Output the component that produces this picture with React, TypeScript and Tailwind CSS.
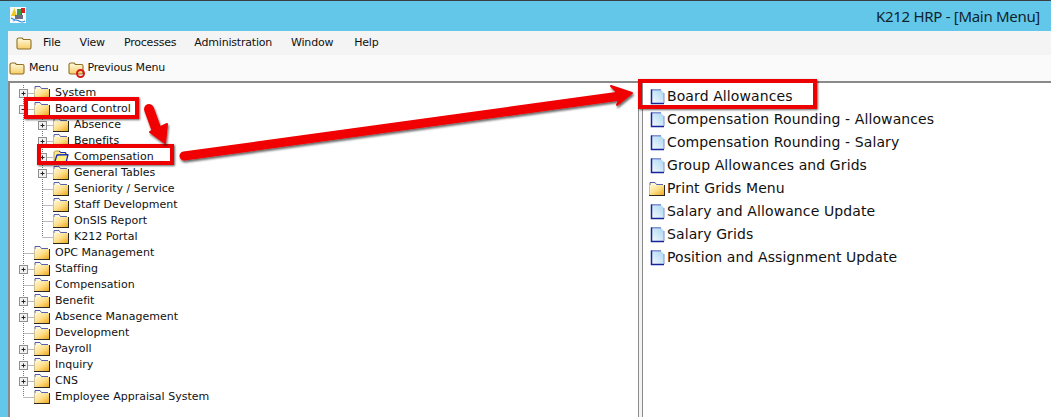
const Folder = ({ open }: { open?: boolean }) =>
  open ? (
    <svg width="16" height="14" viewBox="0 0 16 14" className="shrink-0">
      <path d="M1 12.5 L1 2 L2.5 1 L6 1 L7 2.5 L13 2.5 L13 5 L4 5 L1 12.5 Z" fill="#ffe98a" stroke="#a88a30" strokeWidth="0.8" />
      <path d="M4 5 L15 4.6 L13 12.6 L1.5 12.6 Z" fill="#ffee7a" stroke="#1428c8" strokeWidth="1.3" strokeLinejoin="round" />
      <path d="M6 1 L8 2.5 L12.5 2.5 L13 4.5" fill="none" stroke="#1428c8" strokeWidth="1" />
    </svg>
  ) : (
    <svg width="16" height="14" viewBox="0 0 16 14" className="shrink-0">
      <defs>
        <linearGradient id="fg" x1="0" y1="0" x2="1" y2="1">
          <stop offset="0" stopColor="#fff8dc" />
          <stop offset="0.5" stopColor="#fee08a" />
          <stop offset="1" stopColor="#eea81e" />
        </linearGradient>
      </defs>
      <path d="M1 3 V0.5 H6 L7.5 2.5 H14" fill="#fff6d0" stroke="#2a3aa0" strokeWidth="0.8" />
      <rect x="0.5" y="3" width="14.5" height="10" fill="url(#fg)" />
      <path d="M0.5 3 V13" stroke="#b8a878" strokeWidth="0.7" />
      <path d="M0 13.5 H16 M15.5 3 V14" stroke="#2a2620" strokeWidth="1" />
    </svg>
  );

const ToolFolder = () => (
  <svg width="16" height="13" viewBox="0 0 16 13" className="shrink-0">
    <defs>
      <linearGradient id="tf" x1="0" y1="0" x2="0" y2="1">
        <stop offset="0" stopColor="#fffbe2" />
        <stop offset="1" stopColor="#f6cd64" />
      </linearGradient>
    </defs>
    <path d="M1 3 Q1 1 3 1 L6 1 L7.5 2.5 L13.5 2.5 Q15 2.5 15 4 L15 10.5 Q15 12 13.5 12 L2.5 12 Q1 12 1 10.5 Z" fill="url(#tf)" stroke="#8f6f24" strokeWidth="1.1" />
  </svg>
);

const Doc = () => (
  <svg width="16" height="16" viewBox="0 0 16 16" className="shrink-0">
    <defs>
      <linearGradient id="dg" x1="0" y1="1" x2="1" y2="0">
        <stop offset="0" stopColor="#f8faff" />
        <stop offset="0.5" stopColor="#cfe8f8" />
        <stop offset="1" stopColor="#a8d6f2" />
      </linearGradient>
    </defs>
    <path d="M2 1 L12 1 L15 4 L15 14 L2 14 Z" fill="url(#dg)" />
    <path d="M2.5 0.5 L2.5 14.5 L15 14.5" fill="none" stroke="#16249c" strokeWidth="1.5" />
    <path d="M2 0.8 L12 0.8" stroke="#2a3ab0" strokeWidth="0.8" />
    <path d="M15 4 L15 14" stroke="#8a93c8" strokeWidth="1" />
  </svg>
);

type Row = { label: string; level: 0 | 1; plus?: boolean; open?: boolean; lastSub?: boolean; last?: boolean; minus?: boolean };

const rows: Row[] = [
  { label: "System", level: 0, plus: true },
  { label: "Board Control", level: 0, minus: true },
  { label: "Absence", level: 1, plus: true },
  { label: "Benefits", level: 1, plus: true },
  { label: "Compensation", level: 1, plus: true, open: true },
  { label: "General Tables", level: 1, plus: true },
  { label: "Seniority / Service", level: 1 },
  { label: "Staff Development", level: 1 },
  { label: "OnSIS Report", level: 1 },
  { label: "K212 Portal", level: 1, lastSub: true },
  { label: "OPC Management", level: 0 },
  { label: "Staffing", level: 0, plus: true },
  { label: "Compensation", level: 0 },
  { label: "Benefit", level: 0, plus: true },
  { label: "Absence Management", level: 0, plus: true },
  { label: "Development", level: 0 },
  { label: "Payroll", level: 0, plus: true },
  { label: "Inquiry", level: 0, plus: true },
  { label: "CNS", level: 0, plus: true },
  { label: "Employee Appraisal System", level: 0, last: true },
];

const Connector = ({ r }: { r: Row }) => {
  const w = r.level === 0 ? 24 : 43;
  const cx = r.level === 0 ? 13.5 : 32.5;
  const dots = "1 1";
  return (
    <svg width={w} height="16" className="shrink-0">
      {r.level === 1 && <path d="M13.5 0 V16" stroke="#777" strokeDasharray={dots} />}
      {r.level === 1 && <path d={r.lastSub ? "M32.5 0 V8" : "M32.5 0 V16"} stroke="#777" strokeDasharray={dots} />}
      {r.level === 0 && <path d={r.last ? "M13.5 0 V8" : "M13.5 0 V16"} stroke="#777" strokeDasharray={dots} />}
      <path d={`M${cx} 8.5 H${w}`} stroke="#777" strokeDasharray={dots} />
      {(r.plus || r.minus) && (
        <g>
          <rect x={cx - 4} y="4.5" width="8" height="8" fill="#f1f1f1" stroke="#8f8f8f" />
          <path d={`M${cx - 2} 8.5 H${cx + 2}`} stroke="#222" />
          {r.plus && <path d={`M${cx} 6.5 V10.5`} stroke="#222" />}
        </g>
      )}
    </svg>
  );
};

const right = [
  "Board Allowances",
  "Compensation Rounding - Allowances",
  "Compensation Rounding - Salary",
  "Group Allowances and Grids",
  "Print Grids Menu",
  "Salary and Allowance Update",
  "Salary Grids",
  "Position and Assignment Update",
];

const font = { fontFamily: '"DejaVu Sans", sans-serif' };

export default function App() {
  return (
    <div className="relative w-[1051px] h-[417px] overflow-hidden bg-white text-[#111]" style={font}>
      <div className="h-[31px] bg-[#63c7ea] border-t border-[#3a3f44] flex items-center justify-between pl-[10px] pr-[11px]">
        <svg width="16" height="16" viewBox="0 0 16 16" className="mb-[2px]">
          <rect width="16" height="16" fill="#f6f8fa" />
          <path d="M1 9 L4.5 1 L7 9 Z" fill="#edc81e" />
          <rect x="7" y="2" width="4" height="7" fill="#3f9a4a" />
          <path d="M11 1 H15 V6 H12 V9 H11 Z" fill="#dc1f1f" />
          <rect x="5" y="8" width="8" height="4" fill="#6b6f80" />
          <path d="M1 11 L5 13 M3 14 Q6 12 9 14 T15 14" stroke="#2a86d8" strokeWidth="1.2" fill="none" />
        </svg>
        <span className="text-[15px] tracking-[-0.3px] text-[#10242c] font-['Noto_Sans']">K212 HRP - [Main Menu]</span>
      </div>
      <div className="flex h-[386px]">
        <div className="w-2 bg-[#63c7ea] shrink-0" />
        <div className="flex-1 flex flex-col min-w-0">
          <div className="h-[24px] bg-[#f4f4f4] flex items-center pl-[8px] text-[11px] tracking-[-0.2px]">
            <ToolFolder />
            <div className="flex ml-[11px] gap-[19px]">
              <span>File</span>
              <span>View</span>
              <span>Processes</span>
              <span className="-ml-px">Administration</span>
              <span>Window</span>
              <span className="ml-[2px]">Help</span>
            </div>
          </div>
          <div className="h-[26px] bg-[#fafafa] flex items-center pl-[1px] text-[11px] tracking-[-0.2px]">
            <ToolFolder />
            <span className="ml-[4px]">Menu</span>
            <div className="relative ml-[10px] shrink-0">
              <ToolFolder />
              <span className="absolute right-[-1px] bottom-[-3px] w-[9px] h-[9px] rounded-full border-2 border-[#d81818]" />
            </div>
            <span className="ml-[3px]">Previous Menu</span>
          </div>
          <div className="flex-1 flex border-t-2 border-[#8a8a8a] min-h-0">
            <div className="w-[630px] shrink-0 border-l-2 border-[#8a8a8a] pt-[2px] text-[11px] tracking-[0.02px]">
              {rows.map((r, i) => (
                <div key={i} className="h-4 flex items-center">
                  <Connector r={r} />
                  <Folder open={r.open} />
                  <span className="ml-[5px] whitespace-nowrap">{r.label}</span>
                </div>
              ))}
            </div>
            <div className="w-[5px] shrink-0 bg-[#f4f4f4] border-x border-[#8a8a8a]" />
            <div className="flex-1 pt-[2px] pl-[6px] text-[14px] tracking-[0.1px]">
              {right.map((t, i) => (
                <div key={i} className="h-[23px] flex items-center">
                  {t === "Print Grids Menu" ? <Folder /> : <Doc />}
                  <span className="ml-[2px] whitespace-nowrap">{t}</span>
                </div>
              ))}
            </div>
          </div>
        </div>
      </div>

      <span className="absolute left-[24px] top-[97px] w-[115px] h-[22px] border-[4px] border-[#ee0000] shadow-[1px_1px_2px_rgba(0,0,0,0.6)]" />
      <span className="absolute left-[37px] top-[144px] w-[137px] h-[21px] border-[4px] border-[#ee0000] shadow-[1px_1px_2px_rgba(0,0,0,0.6)]" />
      <span className="absolute left-[638px] top-[79px] w-[179px] h-[30px] border-[4px] border-[#ee0000] shadow-[1px_1px_2px_rgba(0,0,0,0.6)]" />
      <svg width="1051" height="417" className="absolute left-0 top-0 pointer-events-none">
        <defs>
          <filter id="sh" x="-5%" y="-30%" width="110%" height="160%">
            <feDropShadow dx="1" dy="2" stdDeviation="1" floodColor="#000" floodOpacity="0.6" />
          </filter>
        </defs>
        <g filter="url(#sh)">
          <path d="M184 156 L620 96" stroke="#f00000" strokeWidth="9" strokeLinecap="round" fill="none" />
          <path d="M611 86 L632 93 L617 105 L621 96 Z" fill="#f00000" stroke="#f00000" strokeWidth="2" strokeLinejoin="round" />
          <path d="M149 109 Q153 120 157 131" stroke="#f00000" strokeWidth="10" strokeLinecap="round" fill="none" />
          <path d="M150 132 L167 124 L165 143 Z" fill="#f00000" stroke="#f00000" strokeWidth="2" strokeLinejoin="round" />
        </g>
      </svg>
    </div>
  );
}
